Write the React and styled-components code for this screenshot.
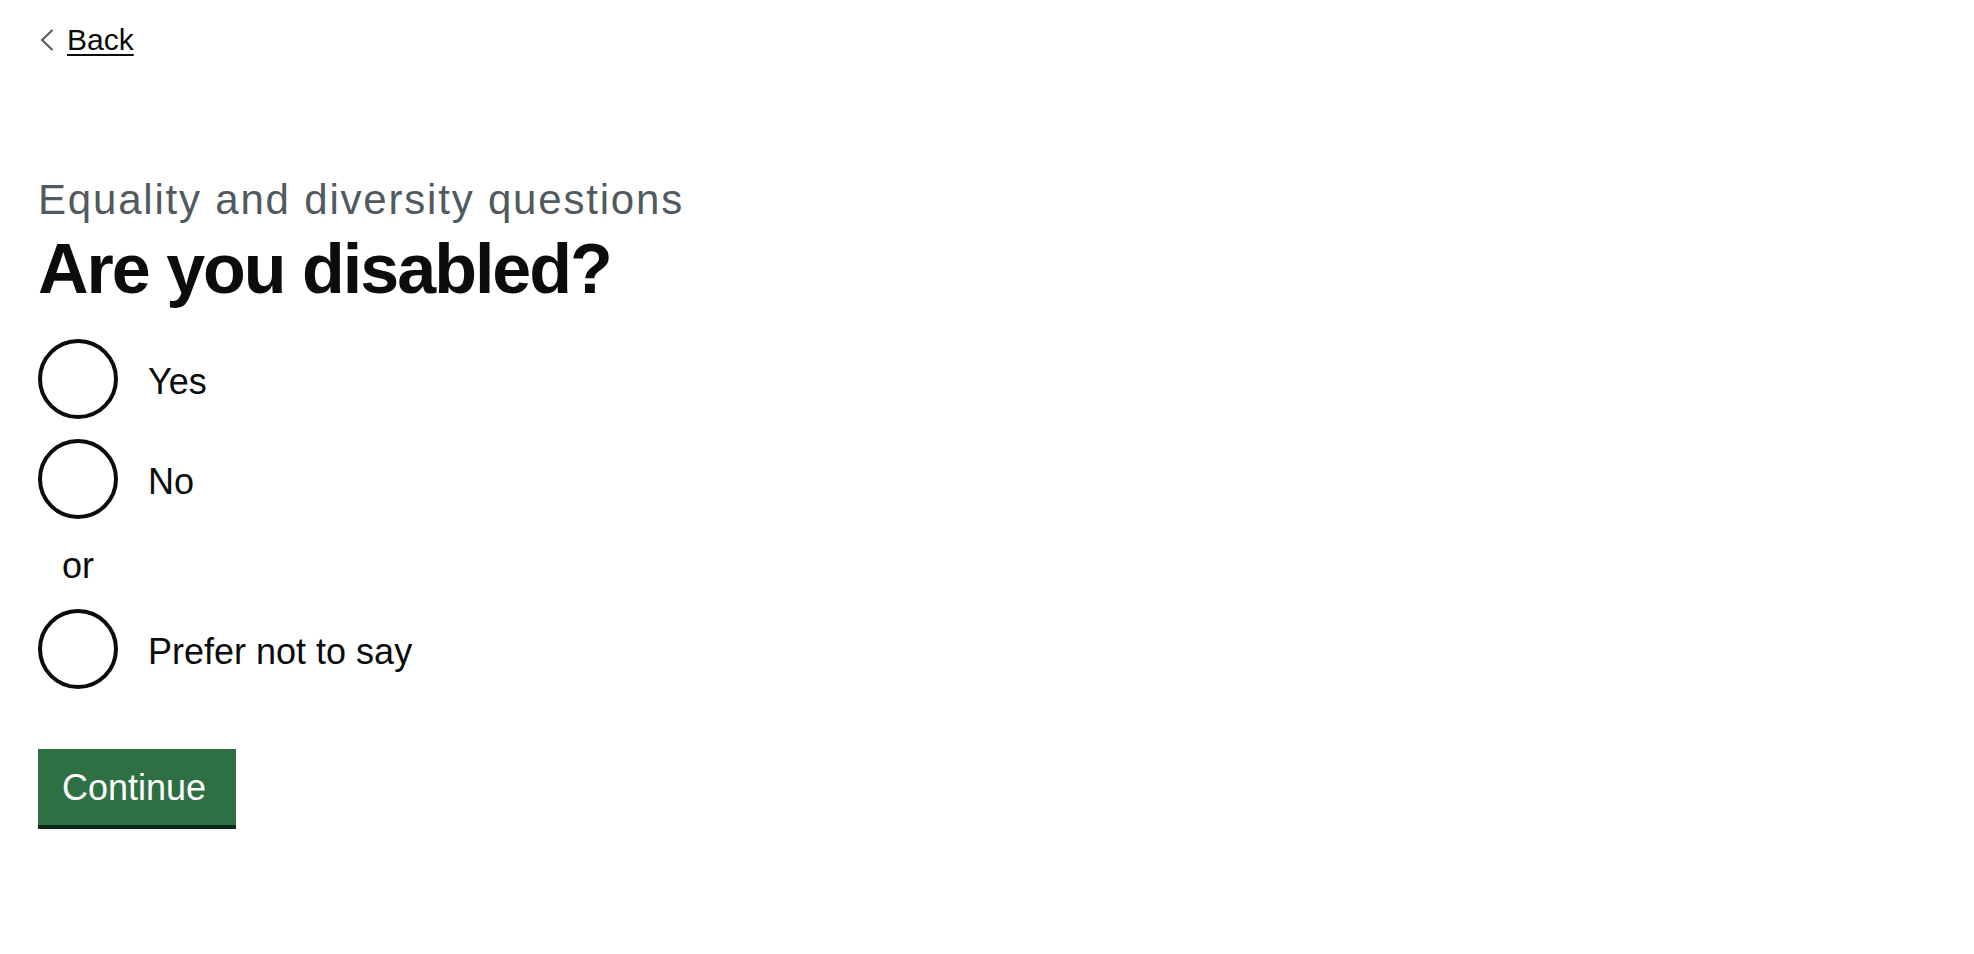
import React, { useState } from 'react';
import styled, { createGlobalStyle } from 'styled-components';

const GlobalStyle = createGlobalStyle`
  html, body {
    margin: 0;
    padding: 0;
    background: #fff;
  }
  body {
    font-family: "Liberation Sans", Arial, sans-serif;
    color: #0b0c0c;
  }
`;

const Page = styled.div`
  padding: 22px 38px 60px;
`;

const BackLink = styled.a`
  display: inline-flex;
  align-items: center;
  gap: 13px;
  margin-left: 2px;
  font-size: 30px;
  line-height: 36px;
  color: #0b0c0c;
  text-decoration: underline;
  text-decoration-thickness: 2px;
  text-underline-offset: 4px;
  cursor: pointer;
`;

const Chevron = styled.svg`
  width: 14px;
  height: 22px;
  flex: none;
`;

const Main = styled.main`
  padding-top: 118px;
`;

const Fieldset = styled.fieldset`
  margin: 0;
  padding: 0;
  border: 0;
`;

const Legend = styled.legend`
  padding: 0;
  margin-bottom: 32px;
`;

const Caption = styled.span`
  display: block;
  font-size: 42px;
  line-height: 48px;
  letter-spacing: 1.8px;
  color: #505a5f;
  margin-bottom: 7px;
`;

const Heading = styled.h1`
  margin: 0;
  font-size: 70px;
  line-height: 76px;
  font-weight: 700;
  letter-spacing: -2px;
  color: #0b0c0c;
`;

const Radios = styled.div`
  display: flex;
  flex-direction: column;
`;

const Item = styled.label`
  display: flex;
  align-items: center;
  gap: 30px;
  margin-bottom: 20px;
  cursor: pointer;
`;

const Circle = styled.input`
  appearance: none;
  box-sizing: border-box;
  margin: 0;
  width: 80px;
  height: 80px;
  flex: none;
  border: 4px solid #0b0c0c;
  border-radius: 50%;
  background: #fff;
  cursor: pointer;

  &:checked {
    background: radial-gradient(circle, #0b0c0c 0 20px, #fff 21px);
  }
`;

const LabelText = styled.span`
  padding-top: 6px;
  font-size: 36px;
  line-height: 40px;
  color: #0b0c0c;
`;

const Divider = styled.div`
  width: 80px;
  box-sizing: border-box;
  padding-top: 3px;
  text-align: center;
  font-size: 36px;
  line-height: 47px;
  margin-bottom: 20px;
  color: #0b0c0c;
`;

const Button = styled.button`
  margin-top: 40px;
  padding: 19px 30px 17px 24px;
  border: 0;
  border-radius: 0;
  background: #2f6f44;
  box-shadow: 0 4px 0 #0f2818;
  color: #fff;
  font-family: "Liberation Sans", Arial, sans-serif;
  font-size: 36px;
  line-height: 40px;
  cursor: pointer;
`;

const options = [
  { value: 'yes', label: 'Yes' },
  { value: 'no', label: 'No' },
];

export default function App() {
  const [answer, setAnswer] = useState('');

  return (
    <>
      <GlobalStyle />
      <Page>
        <BackLink>
          <Chevron viewBox="0 0 14 22">
            <polyline points="12.5,1 2,11 12.5,21" fill="none" stroke="#505a5f" strokeWidth="2" />
          </Chevron>
          Back
        </BackLink>

        <Main>
          <form onSubmit={e => e.preventDefault()}>
            <Fieldset>
              <Legend>
                <Caption>Equality and diversity questions</Caption>
                <Heading>Are you disabled?</Heading>
              </Legend>
              <Radios>
                {options.map(o => (
                  <Item key={o.value}>
                    <Circle
                      type="radio"
                      name="disabled"
                      value={o.value}
                      checked={answer === o.value}
                      onChange={() => setAnswer(o.value)}
                    />
                    <LabelText>{o.label}</LabelText>
                  </Item>
                ))}
                <Divider>or</Divider>
                <Item>
                  <Circle
                    type="radio"
                    name="disabled"
                    value="prefer-not"
                    checked={answer === 'prefer-not'}
                    onChange={() => setAnswer('prefer-not')}
                  />
                  <LabelText>Prefer not to say</LabelText>
                </Item>
              </Radios>
            </Fieldset>
            <Button type="submit">Continue</Button>
          </form>
        </Main>
      </Page>
    </>
  );
}
